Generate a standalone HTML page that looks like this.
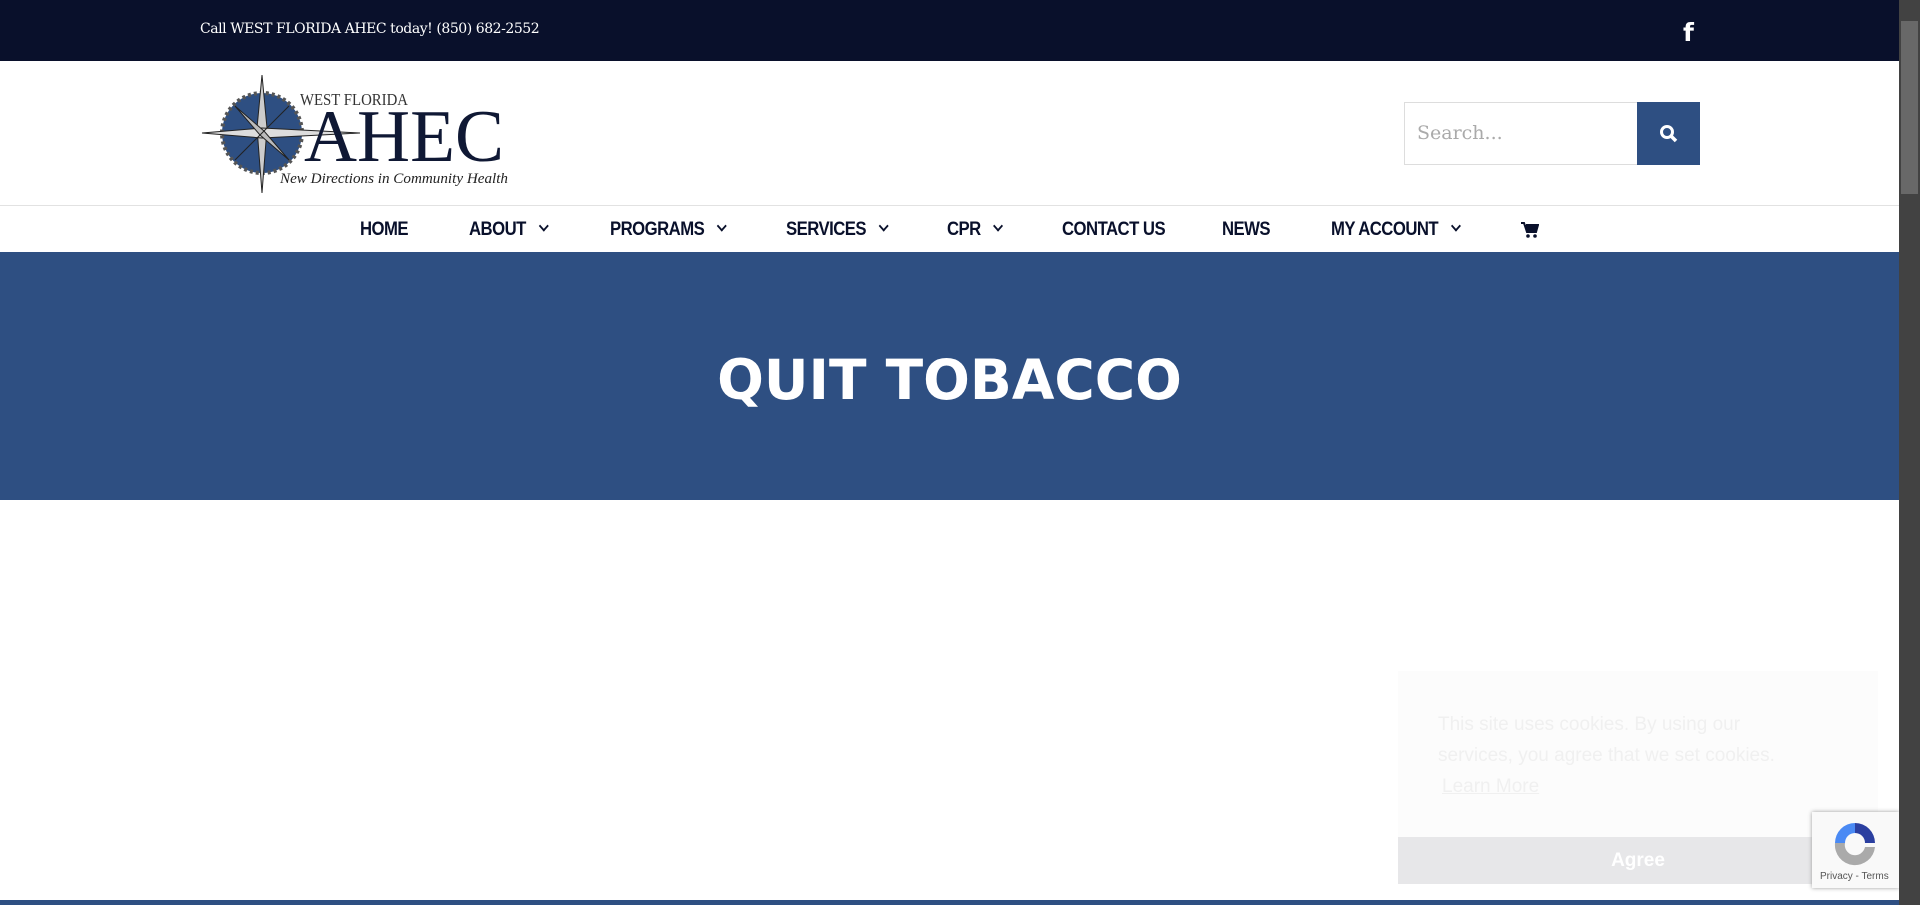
<!DOCTYPE html>
<html><head><meta charset="utf-8"><style>
*{margin:0;padding:0;box-sizing:border-box}
body{width:1920px;height:905px;overflow:hidden;background:#fff;position:relative;font-family:"Liberation Sans",sans-serif}
.top{position:absolute;left:0;top:0;width:1899px;height:61px;background:#09102b}
.top .t{position:absolute;left:200px;top:21px;color:#fff;font-family:"DejaVu Serif",serif;font-size:14px;letter-spacing:-0.45px}
.nav a{position:absolute;top:219px;font-weight:bold;font-size:19px;color:#09102b;text-decoration:none;letter-spacing:-0.6px;transform:scaleX(.88);transform-origin:left}
.chev{display:inline-block;width:8px;height:8px;border-right:2.5px solid #09102b;border-bottom:2.5px solid #09102b;transform:rotate(45deg);margin-left:16px;position:relative;top:-5px}
.banner{position:absolute;left:0;top:252px;width:1899px;height:248px;background:#2e4f82}
.banner h1{position:absolute;left:0;width:1899px;top:96px;text-align:center;color:#fff;font-family:"DejaVu Sans",sans-serif;font-size:55px;font-weight:bold}
.sb{position:absolute;left:1899px;top:0;width:21px;height:905px;background:#424242}
</style></head><body>
<div class="top"><div class="t">Call WEST FLORIDA AHEC today! (850) 682-2552</div>
<div style="position:absolute;left:1683px;top:18px;color:#fff;font-weight:bold;font-size:25px;font-family:'DejaVu Sans',sans-serif">f</div></div>
<svg style="position:absolute;left:200px;top:73px" width="310" height="122" viewBox="0 0 310 122">
<circle cx="62" cy="60" r="40" fill="#2e4f82" stroke="#555" stroke-width="4" stroke-dasharray="3 3"/>
<polygon points="62,2 67,55 62,120 57,55" fill="#ccc" stroke="#222"/>
<polygon points="2,60 62,55 160,60 62,65" fill="#ddd" stroke="#222"/>
<polygon points="35,33 64,58 89,87 60,62" fill="#bbb" stroke="#222"/>
<polygon points="89,33 64,58 35,87 60,62" fill="#bbb" stroke="#222"/>
<text x="100" y="32" font-family="Liberation Serif" font-size="17" fill="#333" textLength="108" lengthAdjust="spacingAndGlyphs">WEST FLORIDA</text>
<text x="104" y="88" font-family="Liberation Serif" font-size="74" fill="#0f1834" textLength="200" lengthAdjust="spacingAndGlyphs">AHEC</text>
<text x="80" y="110" font-family="Liberation Serif" font-style="italic" font-size="15" fill="#222" textLength="228" lengthAdjust="spacingAndGlyphs">New Directions in Community Health</text>
</svg>
<div style="position:absolute;left:1404px;top:102px;width:234px;height:63px;border:1px solid #ddd;font-family:'DejaVu Serif',serif;font-size:19px;color:#aaa;padding:19px 0 0 12px">Search...</div>
<div style="position:absolute;left:1637px;top:102px;width:63px;height:63px;background:#2e4f82">
<svg style="position:absolute;left:22px;top:22px" width="20" height="20" viewBox="0 0 20 20"><circle cx="8" cy="8" r="5.5" fill="none" stroke="#fff" stroke-width="3"/><line x1="12" y1="12" x2="17" y2="17" stroke="#fff" stroke-width="3.5"/></svg></div>
<div style="position:absolute;left:0;top:205px;width:1899px;height:1px;background:#e2e2e2"></div>
<div class="nav">
<a style="left:360px">HOME</a>
<a style="left:469px">ABOUT<span class="chev"></span></a>
<a style="left:610px">PROGRAMS<span class="chev"></span></a>
<a style="left:786px">SERVICES<span class="chev"></span></a>
<a style="left:947px">CPR<span class="chev"></span></a>
<a style="left:1062px">CONTACT US</a>
<a style="left:1222px">NEWS</a>
<a style="left:1331px">MY ACCOUNT<span class="chev"></span></a>
</div>
<svg style="position:absolute;left:1521px;top:222px" width="18" height="16" viewBox="0 0 18 16"><path d="M0 1h3l3 9h9l2-7H5" fill="#09102b" stroke="#09102b" stroke-width="2"/><circle cx="7" cy="14" r="1.8" fill="#09102b"/><circle cx="14" cy="14" r="1.8" fill="#09102b"/></svg>
<div class="banner"><h1>QUIT TOBACCO</h1></div>
<div style="position:absolute;left:0;top:900px;width:1899px;height:5px;background:#2e4f82"></div>
<div style="position:absolute;left:1398px;top:671px;width:480px;height:213px;background:#fcfcfc">
<div style="position:absolute;left:40px;top:38px;color:#f0f0f0;font-size:19px;line-height:31px">This site uses cookies. By using our<br>services, you agree that we set cookies.<br><span style="text-decoration:underline;margin-left:4px">Learn More</span></div>
<div style="position:absolute;left:0;top:166px;width:480px;height:47px;background:#e7e7e9;color:#fff;font-weight:bold;font-size:19px;text-align:center;line-height:47px">Agree</div></div>
<div style="position:absolute;left:1812px;top:812px;width:87px;height:76px;background:#f9f9f9;box-shadow:0 0 4px #999">
<svg style="position:absolute;left:20px;top:8px" width="46" height="46" viewBox="0 0 46 46"><path d="M23 3A20 20 0 0 1 43 23H33A10 10 0 0 0 23 13Z" fill="#2b3fa0"/><path d="M3 23A20 20 0 0 1 23 3V13A10 10 0 0 0 13 23Z" fill="#4a8af4"/><path d="M3 23H13A10 10 0 0 0 33 27L43 27A20 20 0 0 1 3 23Z" fill="#aaa"/></svg>
<div style="position:absolute;left:8px;top:59px;font-size:10px;color:#555">Privacy - Terms</div></div>
<div class="sb"><div style="position:absolute;left:2px;top:21px;width:17px;height:173px;background:#686868"></div></div>
</body></html>
